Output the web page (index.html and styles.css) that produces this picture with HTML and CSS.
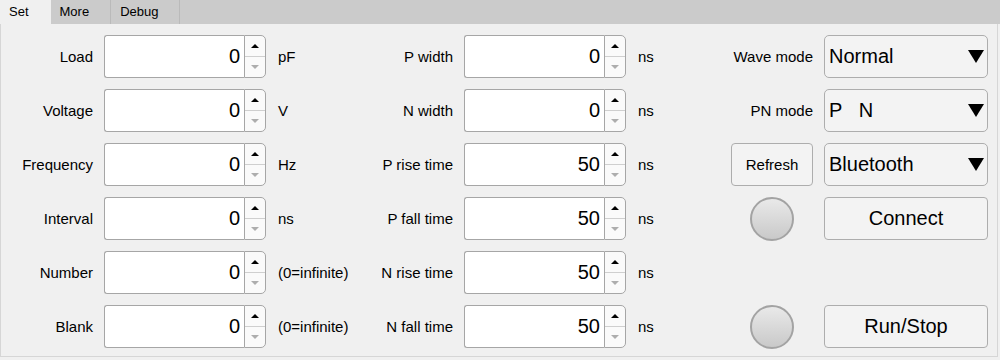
FILE: index.html
```html
<!DOCTYPE html>
<html>
<head>
    <title>Set</title>
    <link rel="stylesheet" href="styles.css">
</head>
<body>
    <div class="tabs">
        <div class="tab active">Set</div>
        <div class="tab">More</div>
        <div class="tab">Debug</div>
    </div>

    <div class="panel">
        <!-- row 1 -->
        <div class="label">Load</div>
        <div class="spin"><div class="spin-value">0</div><div class="spin-btns"><span class="up"></span><span class="down"></span></div></div>
        <div class="unit">pF</div>
        <div class="label">P width</div>
        <div class="spin"><div class="spin-value">0</div><div class="spin-btns"><span class="up"></span><span class="down"></span></div></div>
        <div class="unit">ns</div>
        <div class="label">Wave mode</div>
        <div class="select"><span>Normal</span><span class="arrow"></span></div>

        <!-- row 2 -->
        <div class="label">Voltage</div>
        <div class="spin"><div class="spin-value">0</div><div class="spin-btns"><span class="up"></span><span class="down"></span></div></div>
        <div class="unit">V</div>
        <div class="label">N width</div>
        <div class="spin"><div class="spin-value">0</div><div class="spin-btns"><span class="up"></span><span class="down"></span></div></div>
        <div class="unit">ns</div>
        <div class="label">PN mode</div>
        <div class="select"><span class="pre">P   N</span><span class="arrow"></span></div>

        <!-- row 3 -->
        <div class="label">Frequency</div>
        <div class="spin"><div class="spin-value">0</div><div class="spin-btns"><span class="up"></span><span class="down"></span></div></div>
        <div class="unit">Hz</div>
        <div class="label">P rise time</div>
        <div class="spin"><div class="spin-value">50</div><div class="spin-btns"><span class="up"></span><span class="down"></span></div></div>
        <div class="unit">ns</div>
        <button class="btn btn-small">Refresh</button>
        <div class="select"><span>Bluetooth</span><span class="arrow"></span></div>

        <!-- row 4 -->
        <div class="label">Interval</div>
        <div class="spin"><div class="spin-value">0</div><div class="spin-btns"><span class="up"></span><span class="down"></span></div></div>
        <div class="unit">ns</div>
        <div class="label">P fall time</div>
        <div class="spin"><div class="spin-value">50</div><div class="spin-btns"><span class="up"></span><span class="down"></span></div></div>
        <div class="unit">ns</div>
        <div class="led"></div>
        <button class="btn">Connect</button>

        <!-- row 5 -->
        <div class="label">Number</div>
        <div class="spin"><div class="spin-value">0</div><div class="spin-btns"><span class="up"></span><span class="down"></span></div></div>
        <div class="unit">(0=infinite)</div>
        <div class="label">N rise time</div>
        <div class="spin"><div class="spin-value">50</div><div class="spin-btns"><span class="up"></span><span class="down"></span></div></div>
        <div class="unit">ns</div>
        <div></div>
        <div></div>

        <!-- row 6 -->
        <div class="label">Blank</div>
        <div class="spin"><div class="spin-value">0</div><div class="spin-btns"><span class="up"></span><span class="down"></span></div></div>
        <div class="unit">(0=infinite)</div>
        <div class="label">N fall time</div>
        <div class="spin"><div class="spin-value">50</div><div class="spin-btns"><span class="up"></span><span class="down"></span></div></div>
        <div class="unit">ns</div>
        <div class="led"></div>
        <button class="btn">Run/Stop</button>
    </div>
</body>
</html>
```

FILE: styles.css
```css
body {
    margin: 0;
    font-family: "Liberation Sans", Arial, sans-serif;
    background-color: #f0f0f0;
    color: #000;
}
.tabs {
    display: flex;
    height: 24px;
    background-color: #cbcbcb;
}
.tab {
    padding: 0 21px 0 9px;
    font-size: 13px;
    line-height: 24px;
    border-right: 1px solid #bababa;
}
.tab.active {
    background-color: #f0f0f0;
    border-right: none;
    padding-right: 22px;
}
.panel {
    box-sizing: border-box;
    width: 998px;
    height: 333px;
    padding-top: 11px;
    border: 1px solid #d6d6d6;
    border-top: none;
    display: grid;
    grid-template-columns: 92px 162px 80px 85px 162px 80px 85px 164px;
    grid-auto-rows: 43px;
    column-gap: 11px;
    row-gap: 11px;
    align-content: start;
}
.label {
    font-size: 15px;
    text-align: right;
    align-self: center;
}
.unit {
    font-size: 15px;
    padding-left: 1px;
    align-self: center;
    white-space: nowrap;
}
.spin {
    display: flex;
}
.spin-value {
    flex: 1;
    display: flex;
    align-items: center;
    justify-content: flex-end;
    padding-right: 4px;
    background-color: #fff;
    border: 1px solid #a6a6a6;
    border-right: none;
    border-radius: 3px 0 0 3px;
    font-size: 20px;
}
.spin-btns {
    width: 20px;
    display: flex;
    flex-direction: column;
    background-color: #fafafa;
    border: 1px solid #a6a6a6;
    border-radius: 0 5px 5px 0;
}
.spin-btns span {
    flex: 1;
    display: flex;
    align-items: center;
    justify-content: center;
}
.up {
    border-bottom: 1px solid #cfcfcf;
}
.up::after {
    content: "";
    border-left: 4px solid transparent;
    border-right: 4px solid transparent;
    border-bottom: 4px solid #000;
}
.down::after {
    content: "";
    border-left: 4px solid transparent;
    border-right: 4px solid transparent;
    border-top: 4px solid #adadad;
}
.select {
    display: flex;
    align-items: center;
    justify-content: space-between;
    padding: 0 3px 0 4px;
    background-color: #f3f3f3;
    border: 1px solid #adadad;
    border-radius: 5px;
    font-size: 20px;
}
.pre {
    white-space: pre;
}
.arrow {
    border-left: 8px solid transparent;
    border-right: 8px solid transparent;
    border-top: 13px solid #000;
}
.btn {
    font-family: inherit;
    font-size: 20px;
    color: #000;
    background-color: #f3f3f3;
    border: 1px solid #adadad;
    border-radius: 4px;
    padding: 0;
}
.btn-small {
    font-size: 15px;
    width: 82px;
    justify-self: end;
}
.led {
    box-sizing: border-box;
    width: 44px;
    height: 44px;
    justify-self: end;
    align-self: center;
    margin-right: 19px;
    border-radius: 50%;
    border: 2px solid #a3a3a3;
    background: linear-gradient(#e9e9e9, #c9c9c9);
}
```
